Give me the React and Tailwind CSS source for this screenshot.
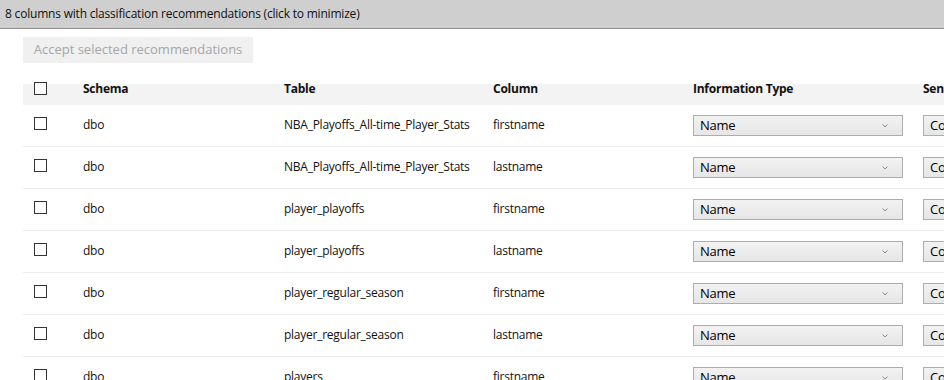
const rows = [
  { schema: "dbo", table: "NBA_Playoffs_All-time_Player_Stats", column: "firstname" },
  { schema: "dbo", table: "NBA_Playoffs_All-time_Player_Stats", column: "lastname" },
  { schema: "dbo", table: "player_playoffs", column: "firstname" },
  { schema: "dbo", table: "player_playoffs", column: "lastname" },
  { schema: "dbo", table: "player_regular_season", column: "firstname" },
  { schema: "dbo", table: "player_regular_season", column: "lastname" },
  { schema: "dbo", table: "players", column: "firstname" },
];

const Checkbox = ({ className = "" }) => (
  <div className={`w-[13px] h-[13px] border border-[#333] bg-white ${className}`} />
);

const Select = ({ value, width, chevron = true }) => (
  <div
    className="h-[21px] border border-[#adadad] bg-[linear-gradient(to_bottom,#f2f2f2,#e6e6e6)] flex items-center pl-[6px] pr-[14px] shrink-0"
    style={{ width }}
  >
    <span className="flex-1 text-[13px] text-black leading-none whitespace-nowrap">{value}</span>
    {chevron && (
      <svg width="6" height="4" viewBox="0 0 6 4" className="shrink-0">
        <polyline points="0.5,0.5 3,3 5.5,0.5" fill="none" stroke="#8a8a8a" strokeWidth="1" />
      </svg>
    )}
  </div>
);

export default function App() {
  return (
    <div className="w-[944px] h-[380px] overflow-hidden bg-white font-['Open_Sans',sans-serif] text-[#111]">
      <div className="h-[29px] bg-[#cfcfcf] border-b border-[#8c8c8c] flex items-center pl-[5px] text-[12px] tracking-[-0.2px]">
        8 columns with classification recommendations (click to minimize)
      </div>

      <div className="pl-[23px] pt-[8px]">
        <div className="w-[230px] h-[26px] bg-[#f0f0f0] flex items-center justify-center text-[13px] text-[#a6a6a6]">
          Accept selected recommendations
        </div>
      </div>

      <div className="ml-[23px] mt-[19px] text-[12px] tracking-[-0.25px] w-[1100px]">
        <div className="h-[23px] flex items-start bg-[linear-gradient(to_bottom,white_2px,#f3f3f3_2px)] font-bold">
          <div className="w-[60px] shrink-0 pl-[11px]">
            <Checkbox />
          </div>
          <div className="w-[201px] shrink-0 leading-[14px]">Schema</div>
          <div className="w-[209px] shrink-0 leading-[14px]">Table</div>
          <div className="w-[200px] shrink-0 leading-[14px]">Column</div>
          <div className="w-[230px] shrink-0 leading-[14px]">Information Type</div>
          <div className="shrink-0 leading-[14px] whitespace-nowrap">Sensitivity Label</div>
        </div>

        {rows.map((r, i) => (
          <div key={i} className="h-[42px] flex items-center border-b border-[#ececec]">
            <div className="w-[60px] shrink-0 pl-[11px] mb-[4px]">
              <Checkbox />
            </div>
            <div className="w-[201px] shrink-0 mb-[1px]">{r.schema}</div>
            <div className="w-[209px] shrink-0 mb-[1px] whitespace-nowrap">{r.table}</div>
            <div className="w-[200px] shrink-0 mb-[1px]">{r.column}</div>
            <div className="w-[230px] shrink-0">
              <Select value="Name" width={210} />
            </div>
            <Select value="Confidential" width={160} />
          </div>
        ))}
      </div>
    </div>
  );
}
